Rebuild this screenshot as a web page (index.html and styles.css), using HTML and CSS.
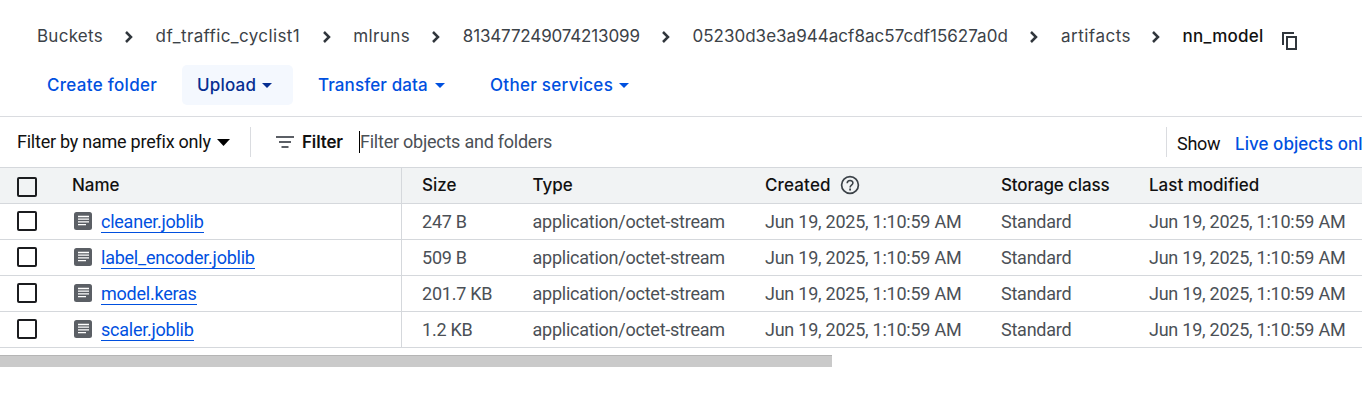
FILE: index.html
```html
<!DOCTYPE html>
<html lang="en">
<head>
<meta charset="utf-8">
<title>Bucket details</title>
<link rel="stylesheet" href="styles.css">
</head>
<body>
<svg class="defs" width="0" height="0">
  <symbol id="chev" viewBox="0 0 10 14"><path d="M2 2l5 5-5 5" fill="none" stroke="#30363c" stroke-width="2.5"/></symbol>
  <symbol id="caret" viewBox="0 0 10 5"><path d="M0 0h10L5 5z" fill="currentColor"/></symbol>
  <symbol id="doc" viewBox="0 0 18 18"><rect width="18" height="18" rx="2.5" fill="#5b5f65"/><path d="M4 4.500h11M4 7.200h11M4 9.900h11M4 12.600h8" stroke="#fff" stroke-width="1.300"/></symbol>
</svg>
<nav class="crumbs">
  <a class="c1">Buckets</a><svg class="chev"><use href="#chev"/></svg>
  <a class="c2">df_traffic_cyclist1</a><svg class="chev"><use href="#chev"/></svg>
  <a class="c3">mlruns</a><svg class="chev"><use href="#chev"/></svg>
  <a class="c4">813477249074213099</a><svg class="chev"><use href="#chev"/></svg>
  <a class="c5">05230d3e3a944acf8ac57cdf15627a0d</a><svg class="chev"><use href="#chev"/></svg>
  <a class="c6">artifacts</a><svg class="chev"><use href="#chev"/></svg>
  <a class="c7">nn_model</a>
  <svg class="copy" viewBox="0 0 16 18"><path d="M1 13V1h11" fill="none" stroke="#30363c" stroke-width="2"/><path d="M5 5h9v12H5z" fill="none" stroke="#30363c" stroke-width="2"/></svg>
</nav>
<div class="actions">
  <button class="b1">Create folder</button>
  <button class="b2"><span>Upload</span><svg class="caret"><use href="#caret"/></svg></button>
  <button class="b3"><span>Transfer data</span><svg class="caret"><use href="#caret"/></svg></button>
  <button class="b4"><span>Other services</span><svg class="caret"><use href="#caret"/></svg></button>
</div>
<div class="filterbar">
  <div class="prefix"><span>Filter by name prefix only</span><svg class="bigcaret" viewBox="0 0 10 5" preserveAspectRatio="none"><path d="M0 0h10L5 5z"/></svg></div>
  <div class="filter"><svg class="lines" viewBox="0 0 18 14"><path d="M0 2h18M3 7h12M5.500 12h7" stroke="#5b5f65" stroke-width="2"/></svg><b>Filter</b><span class="input">Filter objects and folders</span></div>
  <div class="show"><span>Show</span><a>Live objects only</a></div>
</div>
<div class="table">
  <div class="row head"><div class="check"><i></i></div><div class="name"><span class="h1">Name</span></div><div><span class="h2">Size</span></div><div><span class="h3">Type</span></div><div><span class="h4">Created</span><svg class="help" viewBox="0 0 20 20"><circle cx="10" cy="10" r="8.400" fill="none" stroke="#3c4248" stroke-width="1.700"/><path d="M7.200 8.300c0-3.700 5.700-3.600 5.700-.2 0 2-2.800 2.200-2.800 4.300" fill="none" stroke="#3c4248" stroke-width="1.600"/><path d="M9.200 13.600h1.800v1.800H9.200z" fill="#3c4248"/></svg></div><div><span class="h5">Storage class</span></div><div><span class="h6">Last modified</span></div></div>
  <div class="row"><div class="check"><i></i></div><div class="name"><svg class="doc"><use href="#doc"/></svg><a>cleaner.joblib</a></div><div>247 B</div><div>application/octet-stream</div><div>Jun 19, 2025, 1:10:59 AM</div><div>Standard</div><div>Jun 19, 2025, 1:10:59 AM</div></div>
  <div class="row"><div class="check"><i></i></div><div class="name"><svg class="doc"><use href="#doc"/></svg><a>label_encoder.joblib</a></div><div>509 B</div><div>application/octet-stream</div><div>Jun 19, 2025, 1:10:59 AM</div><div>Standard</div><div>Jun 19, 2025, 1:10:59 AM</div></div>
  <div class="row"><div class="check"><i></i></div><div class="name"><svg class="doc"><use href="#doc"/></svg><a>model.keras</a></div><div>201.7 KB</div><div>application/octet-stream</div><div>Jun 19, 2025, 1:10:59 AM</div><div>Standard</div><div>Jun 19, 2025, 1:10:59 AM</div></div>
  <div class="row"><div class="check"><i></i></div><div class="name"><svg class="doc"><use href="#doc"/></svg><a>scaler.joblib</a></div><div>1.2 KB</div><div>application/octet-stream</div><div>Jun 19, 2025, 1:10:59 AM</div><div>Standard</div><div>Jun 19, 2025, 1:10:59 AM</div></div>
</div>
<div class="scroll"></div>
</body>
</html>
```
FILE: styles.css
```css
* { box-sizing: border-box; }
body { margin: 0; width: 1362px; height: 407px; overflow: hidden; background: #fff; font: 18px/22px Roboto, sans-serif; letter-spacing: -.24px; color: #111; white-space: nowrap; }
.defs { display: block; height: 0; }
.crumbs { display: flex; align-items: center; height: 65px; padding: 8px 0 0 37px; font: 400 17px/22px Inter, sans-serif; letter-spacing: 0; color: #3c4248; }
.crumbs a { flex: none; padding-bottom: 1px; }
.chev { flex: none; width: 10px; height: 14px; margin: 0 21.6px 0 21px; }
.c1 { width: 66px; letter-spacing: .25px; } .c2 { width: 145px; letter-spacing: .38px; } .c3 { width: 57px; letter-spacing: .4px; } .c4 { width: 177px; letter-spacing: -.15px; }
.c5 { width: 316px; letter-spacing: .03px; } .c6 { width: 69px; letter-spacing: .5px; } .c7 { width: 82px; color: #111; font-weight: 500; letter-spacing: .25px; }
.copy { flex: none; width: 16px; height: 18px; margin: 8px 0 0 17px; }
.actions { display: flex; height: 51px; }
.actions button { display: flex; align-items: center; flex: none; height: 40px; padding: 0 15px; border: 0; border-radius: 5px; background: none; color: #0050df; font: 500 17px/22px Inter, sans-serif; letter-spacing: .1px; }
.actions .b1 { margin-left: 32px; width: 150px; letter-spacing: .3px; }
.actions .b2 { width: 111px; padding-right: 21px; background: #f4f8fe; color: #062e91; letter-spacing: .2px; }
.actions .b3 { margin-left: 10px; width: 157px; }
.actions .b4 { margin-left: 15px; width: 169px; letter-spacing: .28px; }
.caret { width: 10px; height: 5px; margin-left: auto; flex: none; }
.filterbar { display: flex; align-items: center; height: 51px; border-top: 1px solid #dadce0; }
.prefix { display: flex; align-items: center; height: 30px; width: 251px; padding-left: 17px; border-right: 1px solid #dadce0; }
.bigcaret { width: 13px; height: 7px; margin-left: 6px; flex: none; }
.filter { display: flex; align-items: center; flex: 1; padding-left: 25px; }
.lines { width: 18px; height: 14px; margin-right: 8px; }
.filter b { width: 57px; font: 600 17px/22px Inter, sans-serif; letter-spacing: -.15px; }
.input { border-left: 1px solid #000; color: #4b5056; line-height: 21px; padding-bottom: 1px; }
.show { display: flex; align-items: center; height: 30px; width: 196px; padding: 4px 0 0 10px; border-left: 1px solid #dadce0; overflow: hidden; }
.show span { width: 58px; flex: none; letter-spacing: -.3px; }
.show a { color: #0050df; font: 500 17px/22px Inter, sans-serif; letter-spacing: .05px; }
.table { border-top: 1px solid #d5d8dc; }
.row { display: grid; grid-template-columns: 72px 330px 130.5px 232.5px 236px 148px 213px; height: 36px; border-bottom: 1px solid #d5d8dc; color: #4b5056; }
.row > div { display: flex; align-items: center; }
.row > div:nth-child(3) { padding-left: 20px; }
.row > div.name { border-right: 1px solid #d5d8dc; }
.row > .check { padding: 0 0 1px 17px; }
.check i { width: 20px; height: 20px; border: 2px solid #1b1c1f; border-radius: 2px; }
.head { background: #f1f3f4; color: #111; font: 500 17px/22px Inter, sans-serif; letter-spacing: 0; }
.head span { padding-bottom: 2px; }
.h4 { letter-spacing: .15px; }
.h5 { letter-spacing: -.12px; }
.head > .check { padding: 3px 0 0 17px; }
.doc { width: 18px; height: 18px; margin: 0 9px 1px 2px; }
.name a { color: #0050df; line-height: 21px; border-bottom: 1px solid #0050df; }
.help { width: 20px; height: 20px; margin: 0 0 1px 9px; }
.scroll { width: 832px; height: 12px; margin-top: 7px; background: #cacaca; border-top: 1px solid #b5b5b5; }
```
